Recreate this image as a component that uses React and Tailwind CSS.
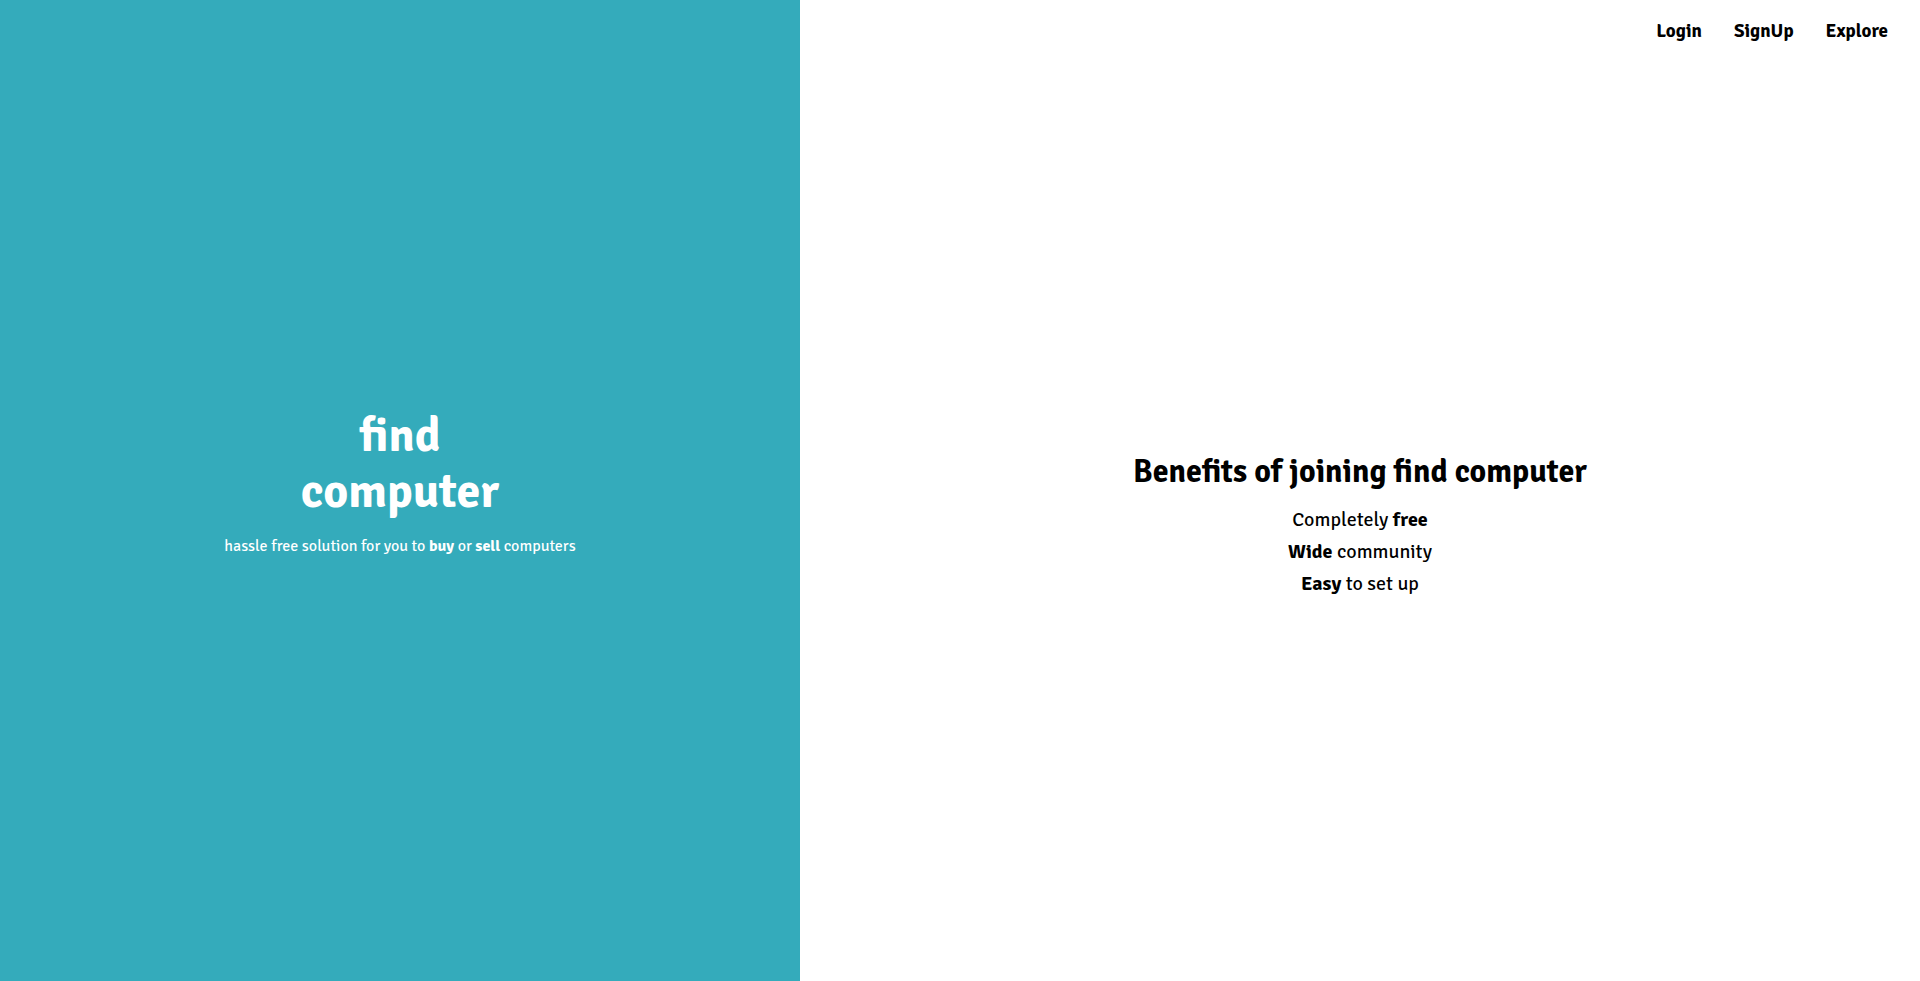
const links = ["Login", "SignUp", "Explore"];

export default function App() {
  return (
    <div className="flex min-h-screen bg-white font-['Signika_Negative','Open_Sans',sans-serif] text-black">
      <section className="flex w-5/12 flex-col items-center justify-center bg-[#34abbb] text-center text-white">
        <h1 className="text-5xl leading-14 font-bold">
          find
          <br />
          computer
        </h1>
        <p className="mt-3.5 mb-4 text-base">
          hassle free solution for you to <b>buy</b> or <b>sell</b> computers
        </p>
      </section>
      <main className="flex flex-1 flex-col">
        <nav className="flex justify-end gap-8 px-8 py-4 text-[19px] leading-[30px] font-bold">
          {links.map((label) => (
            <a key={label} href={`#${label.toLowerCase()}`}>{label}</a>
          ))}
        </nav>
        <div className="flex flex-1 flex-col items-center justify-center pt-2 text-center">
          <h2 className="text-[32px] leading-10 font-bold">Benefits of joining find computer</h2>
          <ul className="mt-3 text-xl leading-8">
            <li>Completely <b>free</b></li>
            <li><b>Wide</b> community</li>
            <li><b>Easy</b> to set up</li>
          </ul>
        </div>
      </main>
    </div>
  );
}
